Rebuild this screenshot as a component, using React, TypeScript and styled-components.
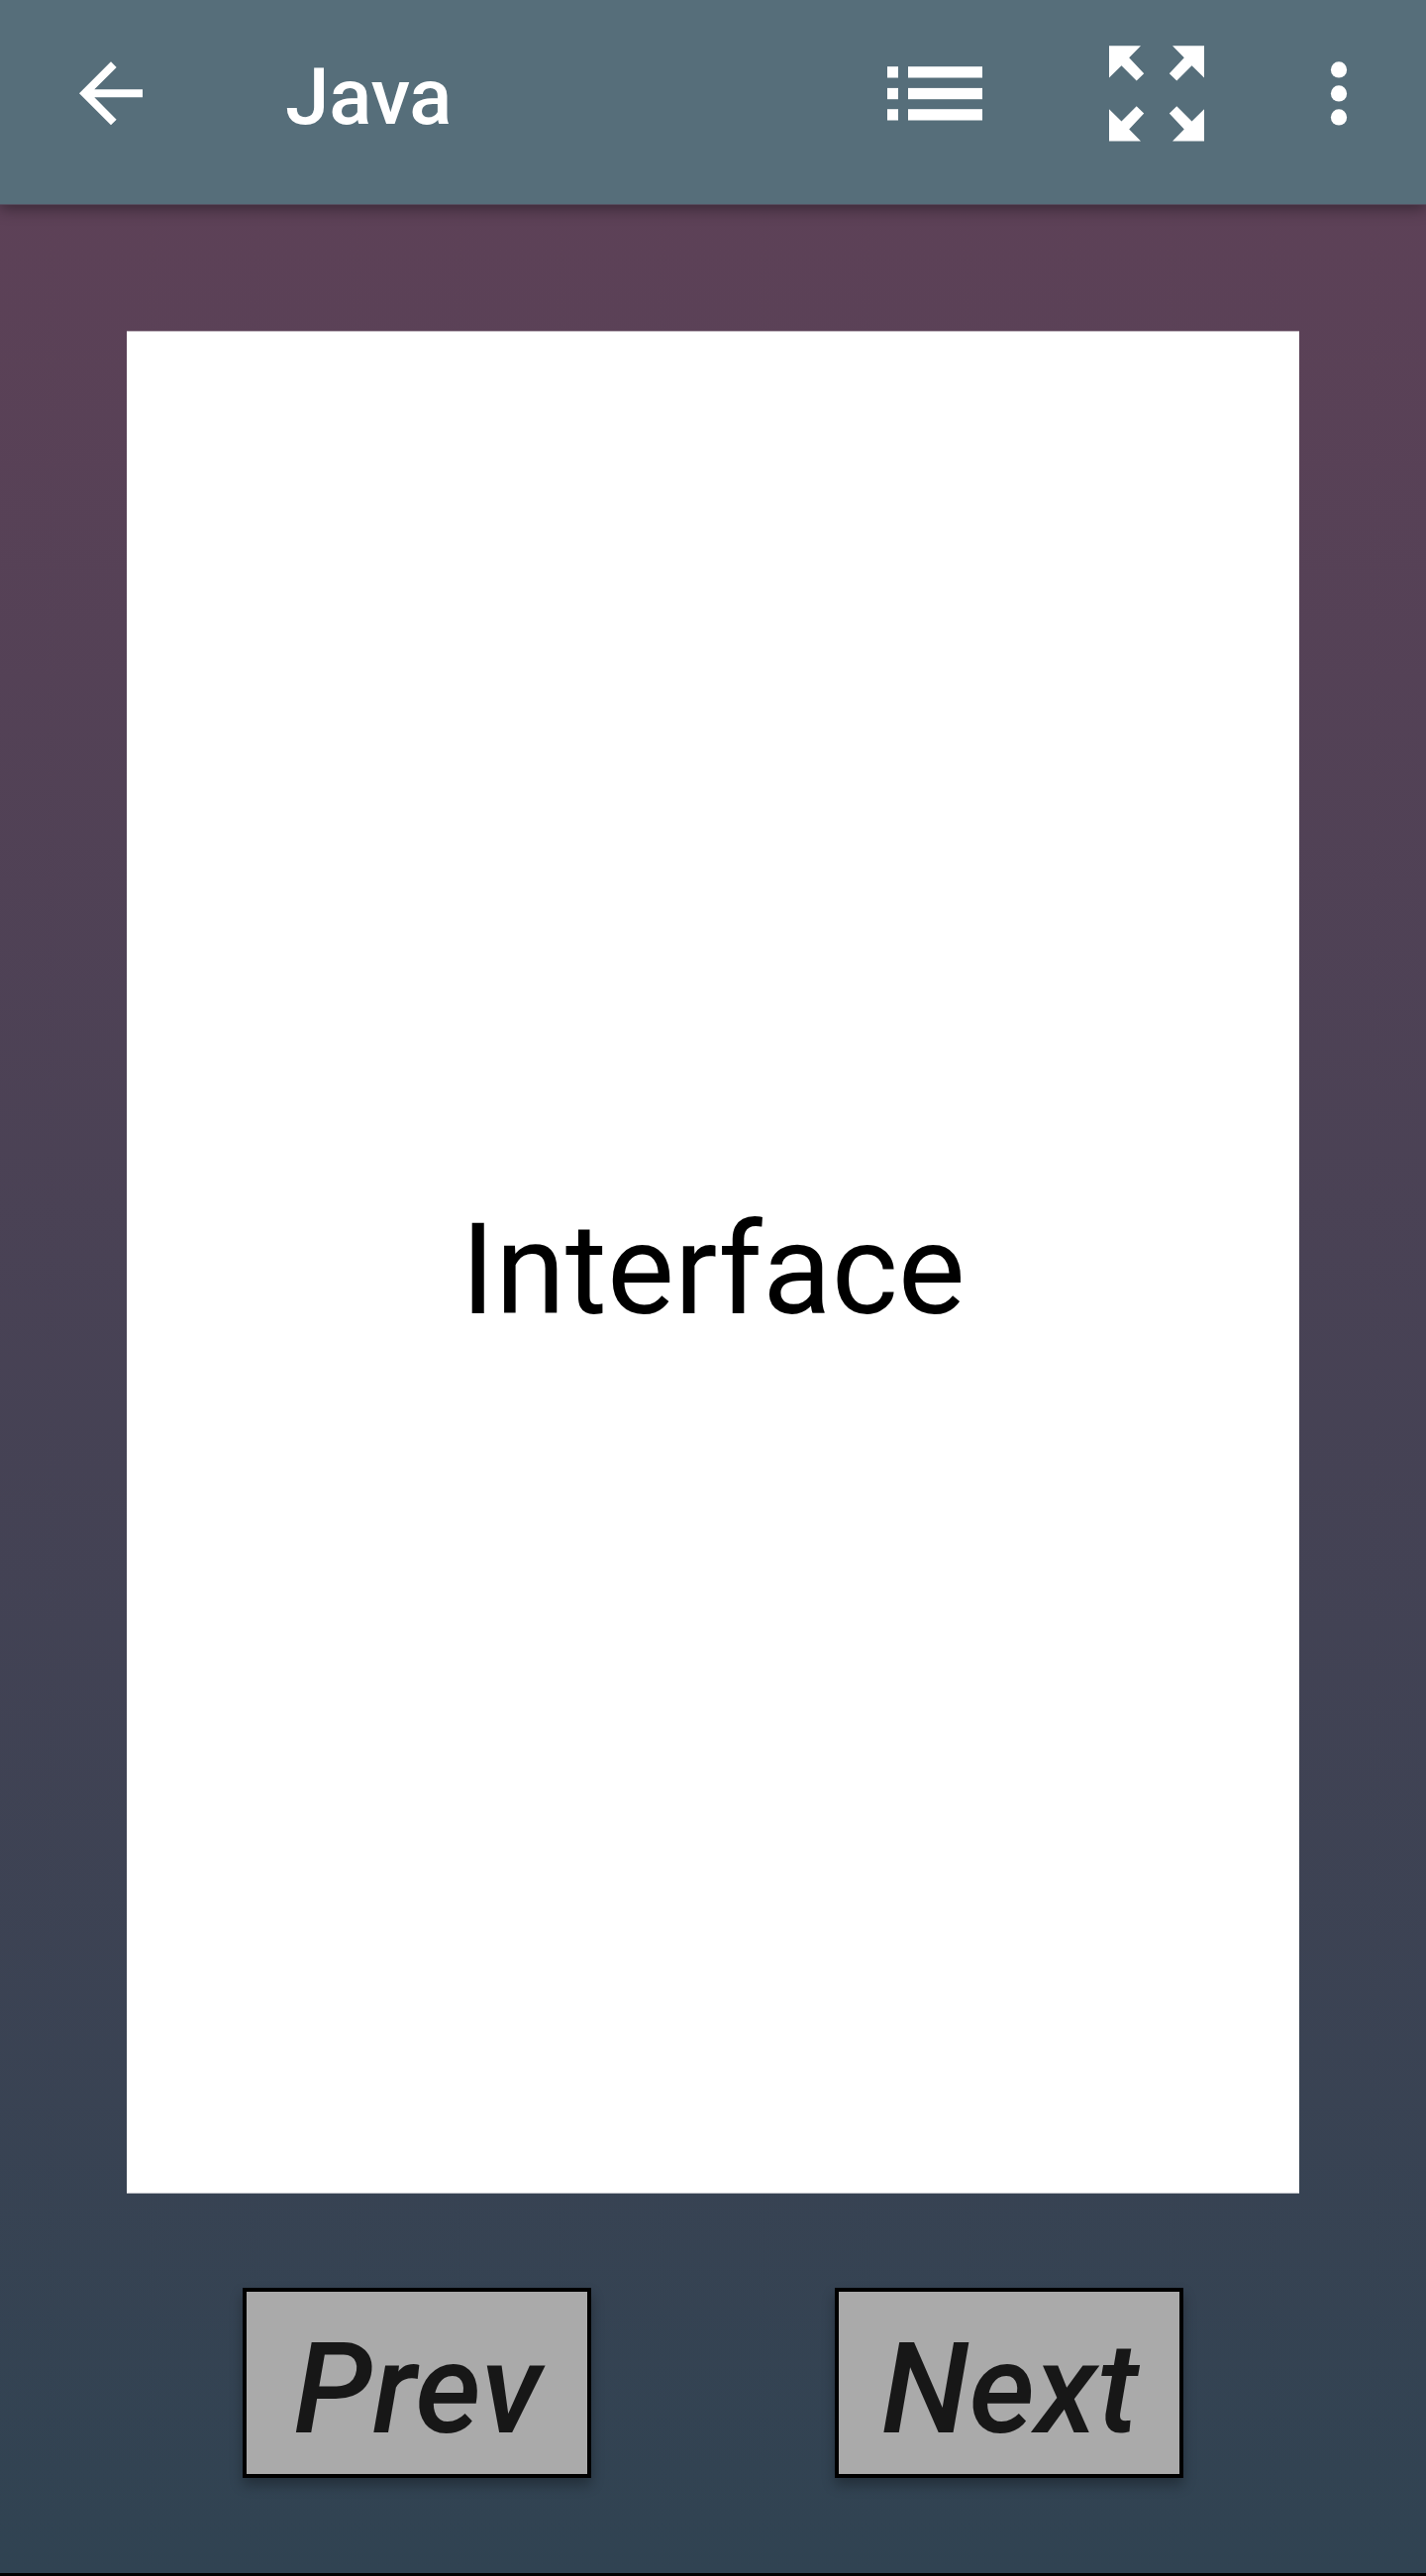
import React from 'react';
import styled, { createGlobalStyle } from 'styled-components';

const GlobalStyle = createGlobalStyle`
  *, *::before, *::after { box-sizing: border-box; }
  body { margin: 0; background: #000; font-family: Roboto, sans-serif; }
`;

const Screen = styled.div`
  display: flex;
  flex-direction: column;
  width: 1440px;
  height: 2601px;
  overflow: hidden;
  border-bottom: 3px solid #000;
  background: linear-gradient(180deg, #5d4157 206px, #304352 100%);
`;

const Toolbar = styled.header`
  display: flex;
  align-items: flex-start;
  flex: none;
  height: 207px;
  padding: 46px 40px 0 64px;
  border-bottom: 1px solid #554f60;
  background: #566e7a;
  background-clip: padding-box;
  color: #fff;
  box-shadow: 0 4px 14px rgba(0, 0, 0, 0.38);
`;

const Title = styled.h1`
  flex: 1;
  margin: 5px 0 0 128px;
  font-size: 80px;
  font-weight: 500;
  line-height: 94px;
  letter-spacing: -0.25px;
`;

const IconButton = styled.button<{ $gap?: number }>`
  display: block;
  flex: none;
  width: 96px;
  height: 97px;
  margin: 0 0 0 ${({ $gap = 0 }) => $gap}px;
  padding: 0;
  border: 0;
  background: none;
  color: inherit;

  svg {
    display: block;
    fill: currentColor;
  }
`;

const Card = styled.main`
  display: flex;
  align-items: center;
  justify-content: center;
  flex: none;
  height: 1881px;
  margin: 127px 128px 0;
  border: solid rgba(255, 255, 255, 0.6);
  border-width: 1px 0;
  background: #fff;
  background-clip: padding-box;
  color: #000;
  font-size: 128px;
  line-height: 150px;
`;

const Term = styled.span`
  margin-top: 14px;
  letter-spacing: 0.1px;
`;

const Controls = styled.nav`
  display: flex;
  gap: 246px;
  padding: 95px 245px 0;
`;

const NavButton = styled.button`
  width: 352px;
  height: 192px;
  padding: 12px 0 0 2px;
  border: 4px solid #000;
  border-radius: 0;
  background: #aaa;
  color: #171717;
  font: italic 500 128px/150px Roboto, sans-serif;
  letter-spacing: 0.45px;
  text-align: center;
  box-shadow: 0 7px 12px rgba(0, 0, 0, 0.3);
`;

const BackIcon = () => (
  <svg width="96" height="97" viewBox="0 0 24 24.25">
    <path d="M20 11.08H7.83l5.59-5.59L12 4.08l-8 8 8 8 1.41-1.41-5.58-5.59H20z" />
  </svg>
);

const ListIcon = () => (
  <svg width="96" height="97" viewBox="0 0 96 97">
    {[21.2, 42.9, 64.2].map((y) => (
      <g key={y}>
        <rect x="0" y={y} width="11" height="11.3" />
        <rect x="21" y={y} width="75" height="11.3" />
      </g>
    ))}
  </svg>
);

const ExpandIcon = () => {
  const arrow = '0,0.2 32,0.2 20.2,12.3 35.2,28.2 27.7,35.6 12.5,20.2 0,32.5';
  return (
    <svg width="96" height="97" viewBox="0 0 96 97">
      {['', 'translate(96 0) scale(-1 1)', 'translate(0 96.8) scale(1 -1)', 'translate(96 96.8) scale(-1 -1)'].map((t) => (
        <polygon key={t} points={arrow} transform={t || undefined} />
      ))}
    </svg>
  );
};

const MoreIcon = () => (
  <svg width="96" height="97" viewBox="0 0 96 97">
    {[24.4, 48.4, 72.4].map((y) => (
      <circle key={y} cx="48" cy={y} r="8.1" />
    ))}
  </svg>
);

export default function App() {
  return (
    <>
      <GlobalStyle />
      <Screen>
        <Toolbar>
          <IconButton aria-label="Back"><BackIcon /></IconButton>
          <Title>Java</Title>
          <IconButton aria-label="List"><ListIcon /></IconButton>
          <IconButton aria-label="Full screen" $gap={128}><ExpandIcon /></IconButton>
          <IconButton aria-label="More options" $gap={88}><MoreIcon /></IconButton>
        </Toolbar>
        <Card>
          <Term>Interface</Term>
        </Card>
        <Controls>
          <NavButton>Prev</NavButton>
          <NavButton>Next</NavButton>
        </Controls>
      </Screen>
    </>
  );
}
